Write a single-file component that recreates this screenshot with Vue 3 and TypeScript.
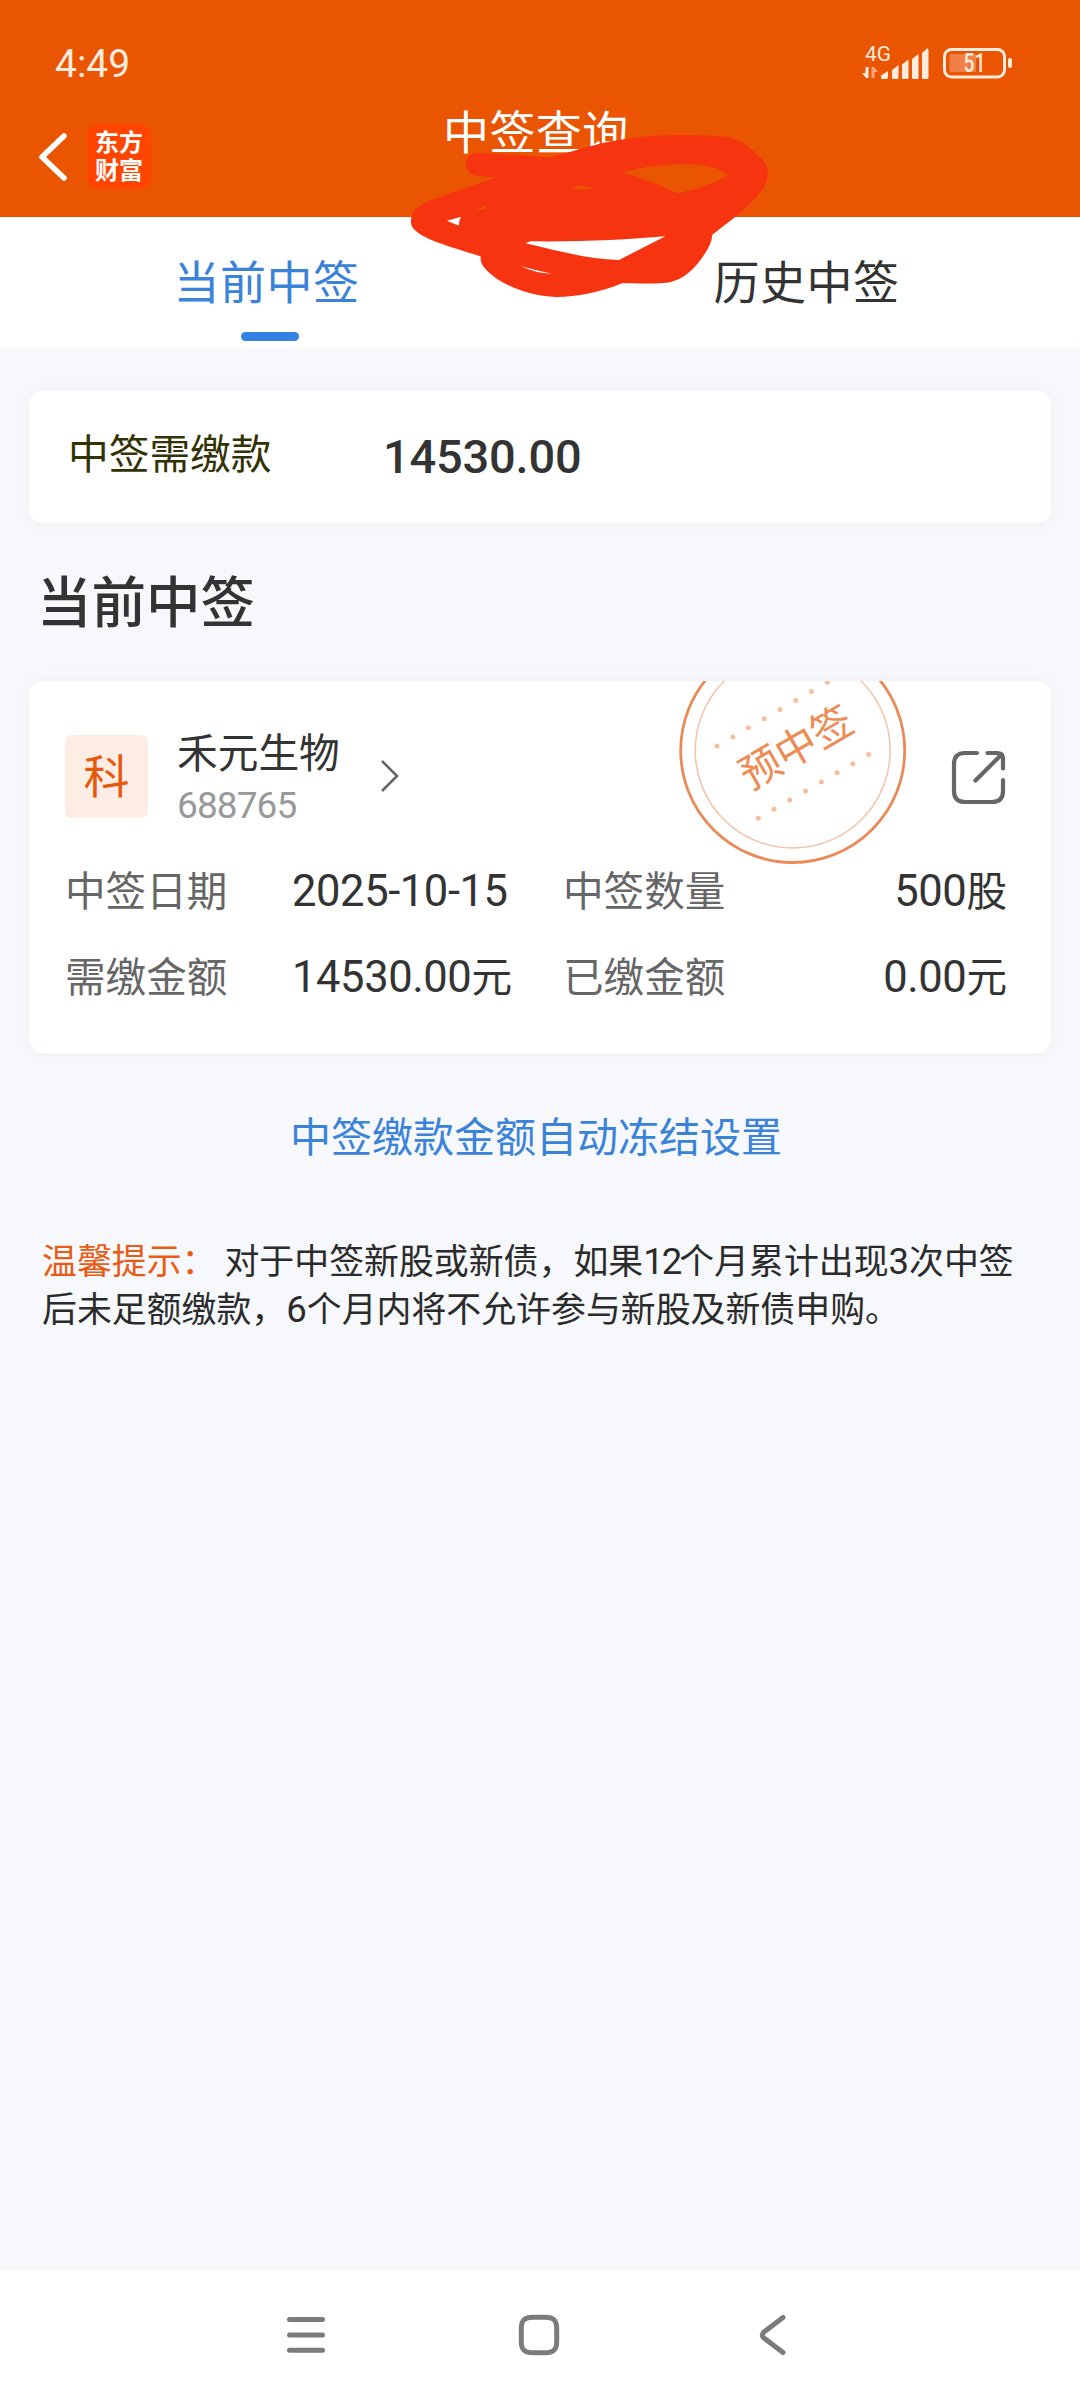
<script setup lang="ts">
interface Field {
  label: string
  amount: string
  unit: string
}

const rows: [Field, Field][] = [
  [
    { label: '中签日期', amount: '2025-10-15', unit: '' },
    { label: '中签数量', amount: '500', unit: '股' },
  ],
  [
    { label: '需缴金额', amount: '14530.00', unit: '元' },
    { label: '已缴金额', amount: '0.00', unit: '元' },
  ],
]

const dots = Array.from({ length: 8 }, (_, i) => i)
</script>

<template>
  <div class="page">
    <header class="header">
      <div class="status">
        <span class="clock">4:49</span>
        <svg class="signal" width="152" height="40" viewBox="0 0 152 40">
          <text x="5" y="20.5" font-size="20.5" fill="#fdebdd" textLength="26" lengthAdjust="spacingAndGlyphs">4G</text>
          <path d="M8.500 27V38H6L2 33H5.500V27Z" fill="#fdebdd" />
          <path d="M11.500 38V27H14L18 32H14.500V38Z" fill="#f5a77a" />
          <g fill="#fdebdd">
            <path d="M21 35.500L28 31V37.500Q28 39 26.500 39H22Q21 39 21 38Z" />
            <path d="M32 30L38.500 25V37.500Q38.500 39 37 39H33.500Q32 39 32 37.500Z" />
            <path d="M42 24.500L48.500 19.500V37.500Q48.500 39 47 39H43.500Q42 39 42 37.500Z" />
            <path d="M52 19L58.500 14V37.500Q58.500 39 57 39H53.500Q52 39 52 37.500Z" />
            <path d="M62 13L67 8.500Q68.500 8 68.500 10V37.500Q68.500 39 67 39H63.500Q62 39 62 37.500Z" />
          </g>
          <rect x="84.500" y="9.500" width="60" height="27.500" rx="7" fill="none" stroke="#fdebdd" stroke-width="3" />
          <path d="M91 14H116V32H91Q89.500 32 89.500 30V16Q89.500 14 91 14Z" fill="#f28046" />
          <rect x="148" y="18" width="4" height="10" rx="2" fill="#fdebdd" />
          <text x="103.500" y="32" font-size="25" font-weight="500" fill="#fdebdd" textLength="22" lengthAdjust="spacingAndGlyphs">51</text>
        </svg>
      </div>
      <div class="titlebar">
        <svg class="back" width="32" height="52" viewBox="0 0 32 52">
          <path d="M27 5L5 26L27 47" fill="none" stroke="#fff" stroke-width="5.500" stroke-linecap="round" stroke-linejoin="round" />
        </svg>
        <div class="logo">东方<br />财富</div>
        <h1 class="title">中签查询</h1>
      </div>
      <svg class="scribble" width="360" height="168" viewBox="90 128 1080 504">
        <path
          fill="#f63410"
          fill-rule="evenodd"
          d="M290 187L512 201C590 180 660 155 740 145C840 130 1000 132 1050 142C1090 150 1120 180 1140 200C1172 230 1170 265 1145 300C1110 350 1050 392 997 433C995 455 985 475 970 497C940 540 905 575 850 578C810 581 765 579 726 579C660 606 590 620 530 620C450 617 390 590 350 565C310 535 300 520 302 498C245 480 175 462 125 435C100 418 93 408 93 395C92 365 110 350 145 332L347 262L290 256C270 252 257 240 258 220C259 203 270 189 290 187Z
             M730 247C800 225 870 221 930 222C985 224 1020 235 1044 253C1000 282 950 296 893 309C850 287 790 265 730 247Z
             M436 459L452 453C600 455 740 448 856 438L717 509C620 507 530 480 436 459Z
             M201 391L243 379Q236 392 237 406Z
             M283 359L317 347Q320 352 315 356Z
             M567 297L603 285L651 297Z
             M449 295L459 294V297H452Z
             M424 528Q470 541 516 550Q465 549 424 528Z"
        />
      </svg>
    </header>

    <nav class="tabs">
      <div class="tab active"><span>当前中签</span></div>
      <div class="tab"><span>历史中签</span></div>
    </nav>

    <main class="content">
      <section class="card summary">
        <span class="summary-label">中签需缴款</span>
        <strong class="summary-value">14530.00</strong>
      </section>

      <h2 class="heading">当前中签</h2>

      <section class="card detail">
        <svg class="stamp" width="230" height="184" viewBox="0 0 230 184">
          <circle cx="114.700" cy="69.500" r="112" fill="none" stroke="#e98a57" stroke-width="2.800" />
          <circle cx="114.700" cy="69.500" r="97.500" fill="none" stroke="#f4c3a8" stroke-width="1.500" />
          <g fill="#f6bd9e">
            <circle v-for="i in dots" :key="'a' + i" :cx="39 + i * 15.750" :cy="65 - i * 9.100" r="2.500" />
            <circle v-for="i in dots" :key="'b' + i" :cx="80.300 + i * 15.750" :cy="137.300 - i * 9.100" r="2.500" />
          </g>
          <text x="118" y="81" transform="rotate(-30 118 66)" text-anchor="middle" class="stamp-text">预中签</text>
        </svg>
        <div class="stock">
          <span class="tag">科</span>
          <div class="names">
            <span class="name">禾元生物</span>
            <span class="code">688765</span>
          </div>
          <svg class="chevron" width="20" height="34" viewBox="0 0 20 34">
            <path d="M2 2L17 17L2 32" fill="none" stroke="#666" stroke-width="2.600" />
          </svg>
          <svg class="share" width="56" height="56" viewBox="0 0 56 56">
            <g fill="none" stroke="#666" stroke-width="4.200" stroke-linecap="round" stroke-linejoin="round">
              <path d="M26 4H14Q3 4 3 15V42Q3 53 14 53H41Q52 53 52 42V31" />
              <path d="M36.500 4H46Q52 4 52 10V19.500" />
              <path d="M24.500 31.500L50.500 5.500" />
            </g>
          </svg>
        </div>
        <div v-for="(row, i) in rows" :key="i" class="row">
          <template v-for="f in row" :key="f.label">
            <span class="label">{{ f.label }}</span>
            <span class="value"><span class="num">{{ f.amount }}</span>{{ f.unit }}</span>
          </template>
        </div>
      </section>

      <a class="link">中签缴款金额自动冻结设置</a>

      <p class="tips"><span class="warn">温馨提示：</span>对于中签新股或新债，如果<span class="n n12">12</span>个月累计出现<span class="n">3</span>次中签<br />后未足额缴款，<span class="n">6</span>个月内将不允许参与新股及新债申购。</p>
    </main>

    <footer class="navbar">
      <svg width="44" height="44" viewBox="0 0 44 44">
        <path d="M5.500 6.500H38.500M5.500 22H38.500M5.500 37.300H38.500" stroke="#7b7b7b" stroke-width="5" stroke-linecap="round" />
      </svg>
      <svg width="44" height="44" viewBox="0 0 44 44">
        <path d="M22 4.200H28C36 4.200 39.700 7 39.700 15V29C39.700 37 36 39.800 28 39.800H16C8 39.800 4.300 37 4.300 29V15C4.300 7 8 4.200 16 4.200Z" fill="none" stroke="#7b7b7b" stroke-width="5" />
      </svg>
      <svg width="44" height="44" viewBox="0 0 44 44">
        <path d="M33 4.500L14 19Q10.500 22 14 25L33 39.500" fill="none" stroke="#7b7b7b" stroke-width="5" stroke-linecap="round" />
      </svg>
    </footer>
  </div>
</template>

<style>
body {
  margin: 0;
}
</style>

<style scoped>
.page {
  width: 1080px;
  height: 2400px;
  display: flex;
  flex-direction: column;
  background: #f6f8fb;
  font-family: 'Noto Sans CJK SC', sans-serif;
  color: #333;
  overflow: hidden;
}

.header {
  position: relative;
  height: 217px;
  flex: none;
  background: #ea5502;
}

.status {
  height: 124px;
  box-sizing: border-box;
  padding: 40px 68px 0 55px;
  display: flex;
  justify-content: space-between;
  font-family: Roboto, sans-serif;
  color: #fdebdd;
}

.clock {
  font-size: 39px;
  line-height: 48px;
  font-weight: 400;
}

.titlebar {
  display: flex;
  height: 66px;
}

.back {
  margin: 7px 18px 0 37px;
}

.logo {
  width: 64px;
  height: 65px;
  border-radius: 12px;
  background: #ff4500;
  color: #fff;
  text-align: center;
  font-size: 24px;
  line-height: 28px;
  font-weight: 700;
  padding-top: 3px;
  box-sizing: border-box;
}

.title {
  margin: -20px 0 0 292px;
  font-size: 46px;
  line-height: 50px;
  font-weight: 400;
  letter-spacing: 0.4px;
  color: #fff;
}

.scribble {
  position: absolute;
  left: 410px;
  top: 133px;
  z-index: 2;
}

.tabs {
  height: 130px;
  flex: none;
  display: flex;
  background: #fff;
}

.tab {
  flex: 1;
  display: flex;
  flex-direction: column;
  align-items: center;
  font-size: 46px;
  letter-spacing: 0.5px;
  line-height: 60px;
  padding-top: 32px;
}

.tab span {
  margin-right: 7px;
}

.active {
  color: #3b83d9;
}

.active::after {
  content: '';
  width: 58px;
  height: 9px;
  margin-top: 23px;
  border-radius: 5px;
  background: #3580e3;
}

.content {
  flex: 1;
  display: flex;
  flex-direction: column;
  padding: 44px 29px 0;
}

.card {
  background: #fff;
  border-radius: 14px;
  box-shadow: 0 0 18px rgba(40, 50, 70, 0.045);
  box-sizing: border-box;
}

.summary {
  height: 132px;
  display: flex;
  align-items: center;
  padding-left: 39px;
}

.summary-label {
  width: 315px;
  font-size: 40.700px;
  line-height: 60px;
  margin-top: -11px;
  color: #333205;
}

.summary-value {
  font-family: Roboto, sans-serif;
  font-size: 47px;
  font-weight: 500;
  margin-top: -2px;
  letter-spacing: -0.200px;
}

.heading {
  margin: 38px 0 0 8px;
  font-size: 54.500px;
  line-height: 76px;
  font-weight: 500;
}

.detail {
  position: relative;
  height: 372px;
  margin-top: 44px;
  padding: 48px 0 0 36px;
}

.stamp {
  position: absolute;
  left: 649px;
  top: 0;
}

.stamp-text {
  font-size: 41px;
  fill: #ee8a54;
}

.stock {
  display: flex;
  height: 117px;
}

.tag {
  width: 83px;
  height: 83px;
  margin-top: 6px;
  border-radius: 6px;
  background: #fdede4;
  color: #e6580e;
  font-size: 46px;
  line-height: 77px;
  text-align: center;
}

.names {
  display: flex;
  flex-direction: column;
  margin-left: 29px;
  width: 203px;
}

.name {
  font-size: 40.700px;
  line-height: 43px;
}

.code {
  font-family: Roboto, sans-serif;
  font-size: 37px;
  line-height: 40px;
  margin-top: 14px;
  letter-spacing: -0.900px;
  color: #999;
}

.chevron {
  margin-top: 30px;
}

.share {
  margin: 20px 0 0 551px;
}

.row {
  display: flex;
  height: 86px;
  line-height: 86px;
  font-size: 40.600px;
  margin-right: 44px;
}

.label {
  width: 227px;
  color: #666;
}

.label:nth-of-type(3) {
  width: 180px;
}

.value {
  white-space: nowrap;
}

.value:nth-of-type(2) {
  width: 271px;
}

.value:last-child {
  flex: 1;
  text-align: right;
}

.num {
  font-family: Roboto, sans-serif;
  font-size: 43.500px;
  line-height: 0;
  letter-spacing: -0.400px;
}

.link {
  margin: 51px 0 0 261px;
  font-size: 41px;
  line-height: 60px;
  color: #3b83d9;
}

.tips {
  margin: 71px 0 0 13px;
  font-size: 34.900px;
  line-height: 48.300px;
  white-space: nowrap;
  color: #2b2b2b;
}

.warn {
  color: #ea5a14;
  margin-right: 8px;
}

.n {
  font-family: Roboto, sans-serif;
  font-size: 36.500px;
  line-height: 0;
}

.n12 {
  letter-spacing: -2px;
  margin-right: -1px;
}

.navbar {
  height: 130px;
  flex: none;
  background: #fff;
  display: flex;
  gap: 189px;
  padding: 43px 0 0 284px;
  box-sizing: border-box;
}
</style>
